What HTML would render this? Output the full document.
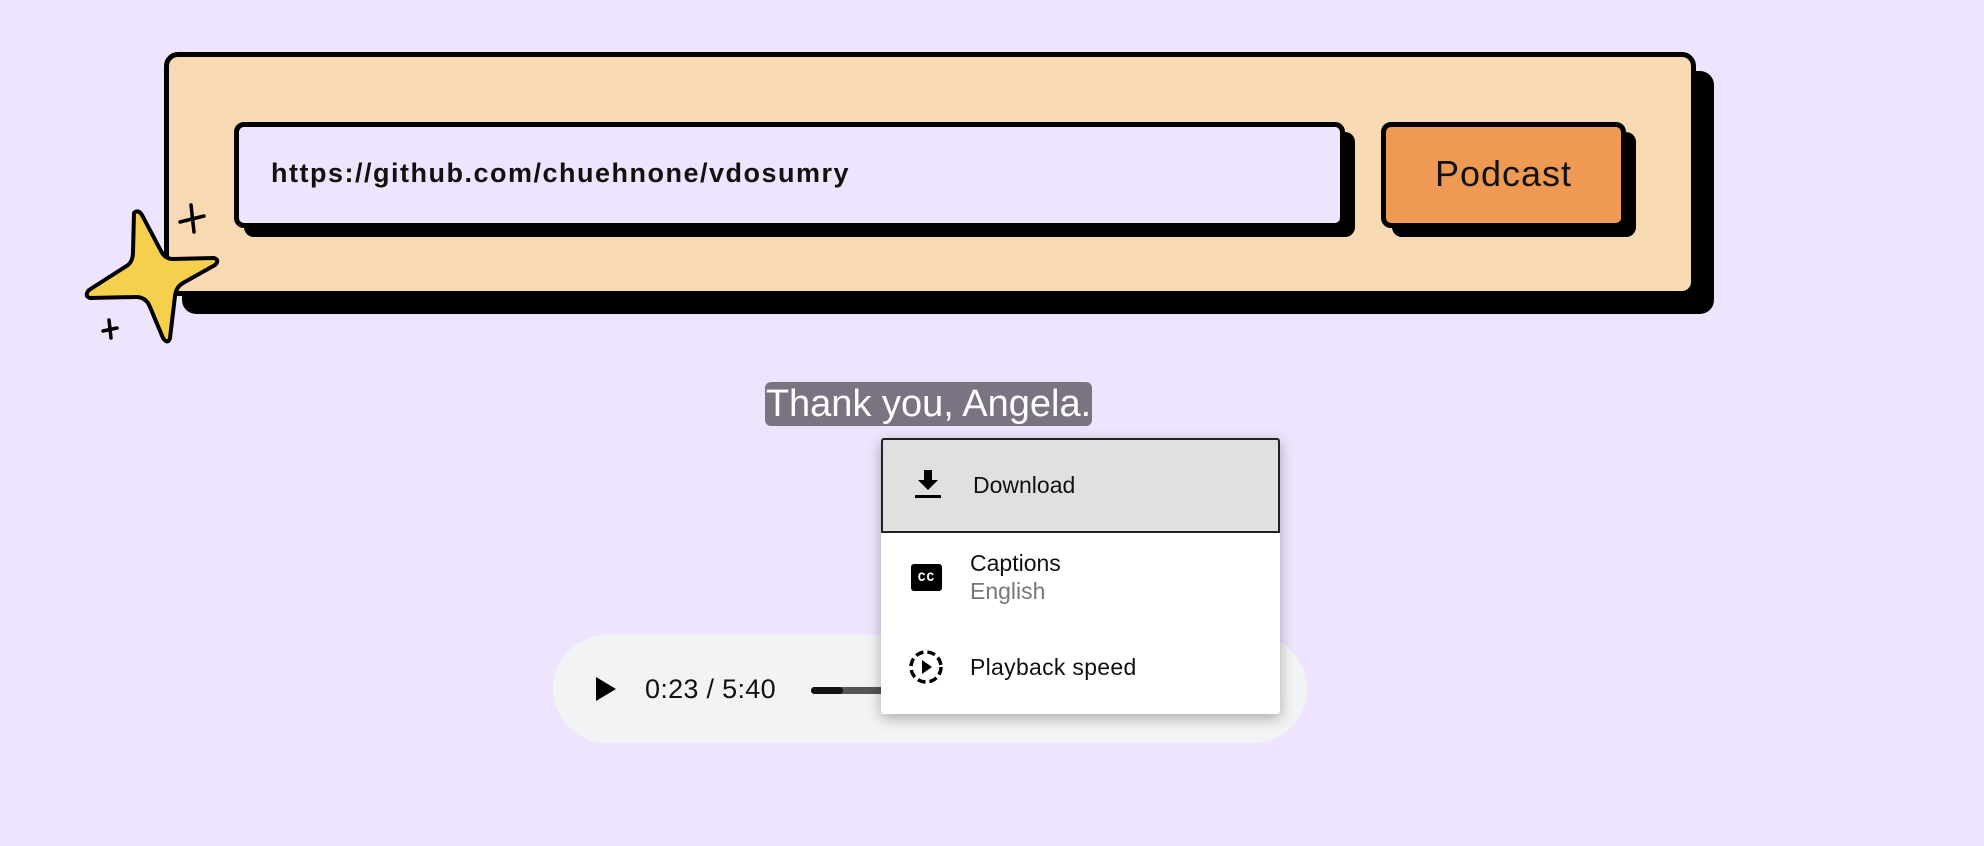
<!DOCTYPE html>
<html><head><meta charset="utf-8"><style>
body{margin:0;width:1984px;height:846px;background:#efe4fd;position:relative;overflow:hidden;font-family:"Liberation Sans",sans-serif}
.a{position:absolute;box-sizing:border-box}
</style></head><body>
<div class="a" style="left:182px;top:71px;width:1532px;height:243px;background:#000;border-radius:14px"></div>
<div class="a" style="left:164px;top:52px;width:1532px;height:244px;background:#f7d9b3;border:5px solid #000;border-radius:14px"></div>
<div class="a" style="left:244px;top:132px;width:1111px;height:105px;background:#000;border-radius:10px"></div>
<div class="a" style="left:234px;top:122px;width:1111px;height:106px;background:#efe4fd;border:5px solid #000;border-radius:10px"></div>
<div class="a" style="left:271px;top:158px;font-size:27px;font-weight:bold;color:#111;letter-spacing:1.5px">https://github.com/chuehnone/vdosumry</div>
<div class="a" style="left:1392px;top:132px;width:244px;height:105px;background:#000;border-radius:10px"></div>
<div class="a" style="left:1381px;top:122px;width:245px;height:106px;background:#ee9a52;border:5px solid #000;border-radius:10px;text-align:center;line-height:94px;font-size:36px;color:#111;letter-spacing:1px">Podcast</div>
<svg class="a" style="left:0;top:0" width="300" height="360">
<path d="M134 213 Q138 209 142 215 L161 251 Q165 259 173 259 L214 258 Q220 260 215 265 L183 283 Q176 287 175 296 L170 338 Q168 345 163 338 L150 307 Q146 297 136 297 L90 298 Q84 296 89 290 L128 265 Q133 261 133 252 Z" fill="#f4d04c" stroke="#000" stroke-width="4" stroke-linejoin="round"/>
<path d="M191 205 L194 232 M180 222 L204 216 M109 320 L111 338 M103 331 L117 328" stroke="#000" stroke-width="3.5" stroke-linecap="round"/>
</svg>
<div class="a" style="left:765px;top:382px;width:327px;height:44px;background:#7a7382;border-radius:6px;color:#fff;font-size:38px;line-height:44px;text-align:center">Thank you, Angela.</div>
<div class="a" style="left:553px;top:635px;width:754px;height:108px;background:#f1f3f4;border-radius:54px"></div>
<svg class="a" style="left:594px;top:676px" width="24" height="26"><path d="M2 1 L22 13 L2 25Z" fill="#000"/></svg>
<div class="a" style="left:645px;top:674px;font-size:27px;color:#111;letter-spacing:0.3px">0:23 / 5:40</div>
<div class="a" style="left:811px;top:687px;width:90px;height:7px;background:#555;border-radius:4px"></div>
<div class="a" style="left:811px;top:687px;width:32px;height:7px;background:#111;border-radius:4px"></div>
<div class="a" style="left:881px;top:438px;width:399px;height:276px;background:#fff;border-radius:3px;box-shadow:0 4px 14px rgba(0,0,0,.3)"></div>
<div class="a" style="left:881px;top:438px;width:399px;height:95px;background:#e0e0e0;border:2px solid #222;border-radius:3px 3px 0 0"></div>
<svg class="a" style="left:914px;top:469px" width="28" height="30"><path d="M10 1h8v10h6L14 21 4 11h6z" fill="#000"/><rect x="1" y="26" width="26" height="3" fill="#000"/></svg>
<div class="a" style="left:973px;top:472px;font-size:23px;color:#111">Download</div>
<div class="a" style="left:911px;top:564px;width:31px;height:27px;background:#000;border-radius:3px;color:#fff;font:bold 13px 'Liberation Mono',monospace;text-align:center;line-height:27px;letter-spacing:1px">CC</div>
<div class="a" style="left:970px;top:550px;font-size:23px;color:#111">Captions</div>
<div class="a" style="left:970px;top:578px;font-size:23px;color:#777">English</div>
<svg class="a" style="left:908px;top:649px" width="36" height="36"><circle cx="18" cy="18" r="15" fill="none" stroke="#000" stroke-width="3.5" stroke-dasharray="8 4"/><path d="M14 11 L24 18 L14 25Z" fill="#000"/></svg>
<div class="a" style="left:970px;top:654px;font-size:23px;color:#111;letter-spacing:0.3px">Playback speed</div>
</body></html>
